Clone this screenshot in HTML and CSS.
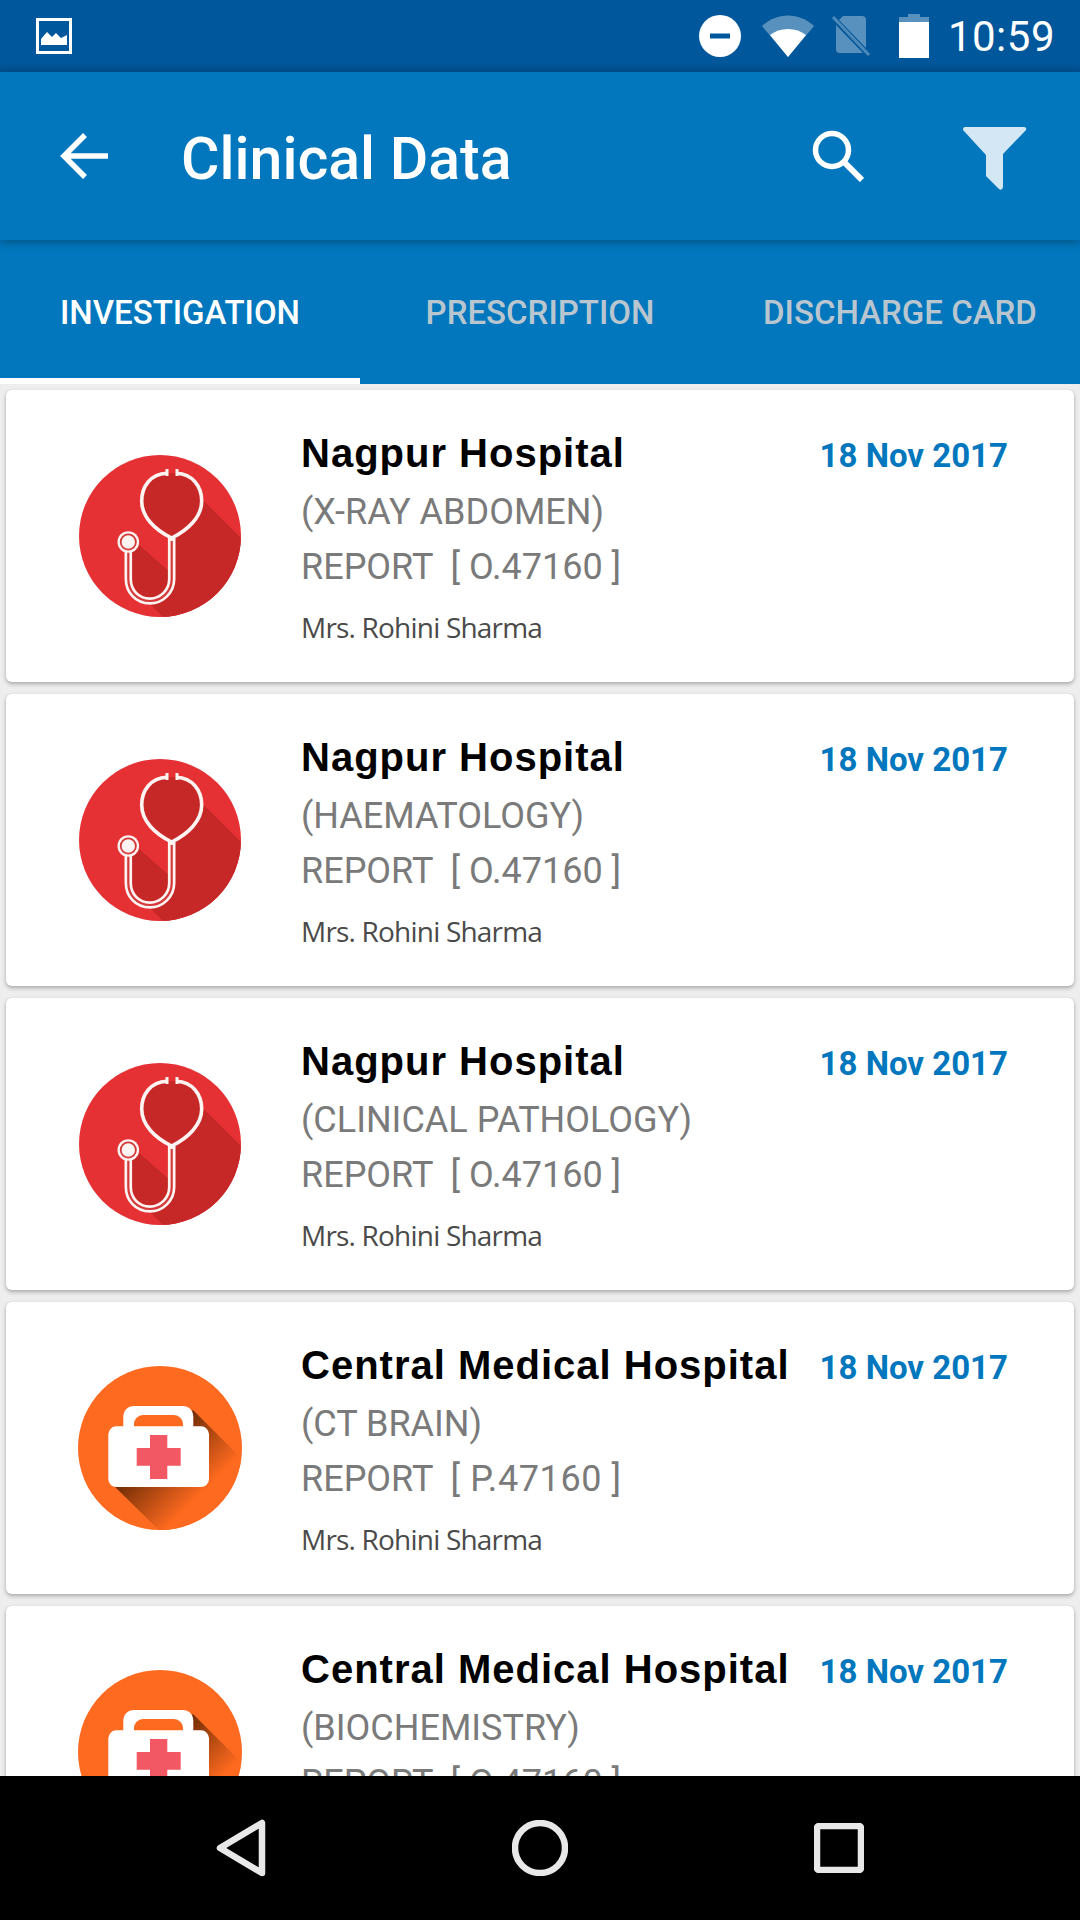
FILE: index.html
```html
<!DOCTYPE html>
<html lang="en">
<head>
    <meta charset="UTF-8">
    <meta name="viewport" content="width=device-width, initial-scale=1.0">
    <title>Clinical Data</title>
    <link rel="stylesheet" href="styles.css">
</head>
<body>
    <svg class="defs" width="0" height="0">
        <defs>
            <clipPath id="stethClip"><circle cx="81" cy="81" r="81"/></clipPath>
            <clipPath id="kitClip"><circle cx="82" cy="82" r="82"/></clipPath>
            <linearGradient id="kitShade" gradientUnits="userSpaceOnUse" x1="40" y1="119" x2="86" y2="165">
                <stop offset="0" stop-color="#6f2c06"/>
                <stop offset="1" stop-color="#fe6a1f"/>
            </linearGradient>
            <symbol id="steth" viewBox="0 0 162 162">
                <circle cx="81" cy="81" r="81" fill="#e53034"/>
                <g clip-path="url(#stethClip)">
                    <polygon points="97,18 170,91 170,170 92,170 48,126 50,96 58,88 92,118 92,80" fill="#c62828"/>
                </g>
                <path d="M87.7 18.3C72 19 62.7 31 62.7 46C62.7 62 76 75 92.7 83C109 75 122.7 62 122.7 46C122.7 31 113 19 97.7 18.3" fill="#c62828" stroke="#fdf3f1" stroke-width="3.6"/>
                <path d="M88 14V21M98 14V21" stroke="#fdf3f1" stroke-width="3" fill="none"/>
                <path d="M92.7 83V124C92.7 137 82 146 71 146C58 146 49.3 136 49.3 124V97" fill="none" stroke="#fdf3f1" stroke-width="7.6"/>
                <path d="M92.7 86V124C92.7 137 82 146 71 146C58 146 49.3 136 49.3 124V97" fill="none" stroke="#d3393b" stroke-width="2.2"/>
                <circle cx="49.3" cy="87" r="10.8" fill="#fdf3f1"/>
                <circle cx="49.3" cy="87" r="7.6" fill="#fdf3f1" stroke="#d3393b" stroke-width="1.8"/>
            </symbol>
            <symbol id="kit" viewBox="0 0 164 164">
                <circle cx="82" cy="82" r="82" fill="#fe6a1f"/>
                <g clip-path="url(#kitClip)">
                    <polygon points="115,44 175,104 175,175 92,175 34,118" fill="url(#kitShade)"/>
                </g>
                <path d="M45.3 62V50a10 10 0 0 1 10-10H105.3a10 10 0 0 1 10 10V62Z" fill="#fff"/>
                <path d="M56 61V58a9 9 0 0 1 9-9H96a9 9 0 0 1 9 9V61Z" fill="#fe6a1f"/>
                <rect x="30.3" y="60.3" width="100.7" height="60.7" rx="8" fill="#fff"/>
                <path d="M72 69H89.3V82H102.7V99.7H89.3V113H72V99.7H58.7V82H72Z" fill="#f25764"/>
            </symbol>
        </defs>
    </svg>

    <div class="phone">
        <div class="status-bar">
            <svg class="st-image" width="36" height="36" viewBox="0 0 36 36">
                <rect x="1.5" y="1.5" width="33" height="33" fill="none" stroke="#fff" stroke-width="3"/>
                <path d="M5 27V21L11 14L16 19L20 15L25 20L31 17V27Z" fill="#fff"/>
            </svg>
            <div class="status-right">
                <svg width="42" height="42" viewBox="0 0 42 42">
                    <circle cx="21" cy="21" r="21" fill="#fff"/>
                    <rect x="11" y="18.5" width="20" height="5" fill="#01579b"/>
                </svg>
                <svg width="52" height="42" viewBox="0 0 52 42">
                    <path d="M26 42L0 11C15 -3 37 -3 52 11Z" fill="#fff" opacity="0.35"/>
                    <path d="M26 42L8 20C18 12 34 12 44 20Z" fill="#fff"/>
                </svg>
                <svg class="st-sim" width="40" height="42" viewBox="0 0 40 42">
                    <path d="M12 1H31a4 4 0 0 1 4 4V33L8 5Z" fill="#fff" opacity="0.35"/>
                    <path d="M5 10L32 38H9a4 4 0 0 1-4-4Z" fill="#fff" opacity="0.35"/>
                    <path d="M2 2L38 40" stroke="#fff" stroke-width="3" opacity="0.3"/>
                </svg>
                <svg class="st-battery" width="30" height="44" viewBox="0 0 30 44">
                    <path d="M9 0H21V3H30V8H0V3H9Z" fill="#fff" opacity="0.35"/>
                    <rect y="8" width="30" height="36" fill="#fff"/>
                </svg>
                <span class="clock">10:59</span>
            </div>
        </div>

        <header class="toolbar">
            <svg class="back" width="50" height="48" viewBox="0 0 50 48">
                <path d="M48 24H4M25 3L4 24L25 45" fill="none" stroke="#fff" stroke-width="5.5"/>
            </svg>
            <h1 class="page-title">Clinical Data</h1>
            <svg class="search" width="52" height="52" viewBox="0 0 52 52">
                <circle cx="20" cy="20" r="16.5" fill="none" stroke="#fff" stroke-width="5.5"/>
                <path d="M32 32L50 50" stroke="#fff" stroke-width="6"/>
            </svg>
            <svg class="filter" width="64" height="64" viewBox="0 0 64 64">
                <path d="M2 0H61Q64 0 63 3L40 27V60Q39 64 36 62L23 49V28L0 3Q0 0 2 0Z" fill="#d3e7f5"/>
            </svg>
        </header>

        <nav class="tabs">
            <div class="tab active">INVESTIGATION</div>
            <div class="tab">PRESCRIPTION</div>
            <div class="tab">DISCHARGE CARD</div>
        </nav>

        <main class="list">
            <article class="card">
                <svg class="icon"><use href="#steth"/></svg>
                <div class="info">
                    <div class="top-row"><span class="hospital">Nagpur Hospital</span><span class="date">18 Nov 2017</span></div>
                    <div class="test">(X-RAY ABDOMEN)</div>
                    <div class="report">REPORT  [ O.47160 ]</div>
                    <div class="patient">Mrs. Rohini Sharma</div>
                </div>
            </article>
            <article class="card">
                <svg class="icon"><use href="#steth"/></svg>
                <div class="info">
                    <div class="top-row"><span class="hospital">Nagpur Hospital</span><span class="date">18 Nov 2017</span></div>
                    <div class="test">(HAEMATOLOGY)</div>
                    <div class="report">REPORT  [ O.47160 ]</div>
                    <div class="patient">Mrs. Rohini Sharma</div>
                </div>
            </article>
            <article class="card">
                <svg class="icon"><use href="#steth"/></svg>
                <div class="info">
                    <div class="top-row"><span class="hospital">Nagpur Hospital</span><span class="date">18 Nov 2017</span></div>
                    <div class="test">(CLINICAL PATHOLOGY)</div>
                    <div class="report">REPORT  [ O.47160 ]</div>
                    <div class="patient">Mrs. Rohini Sharma</div>
                </div>
            </article>
            <article class="card">
                <svg class="icon icon-kit"><use href="#kit"/></svg>
                <div class="info">
                    <div class="top-row"><span class="hospital">Central Medical Hospital</span><span class="date">18 Nov 2017</span></div>
                    <div class="test">(CT BRAIN)</div>
                    <div class="report">REPORT  <span class="code-wide">[ P.47160 ]</span></div>
                    <div class="patient">Mrs. Rohini Sharma</div>
                </div>
            </article>
            <article class="card">
                <svg class="icon icon-kit"><use href="#kit"/></svg>
                <div class="info">
                    <div class="top-row"><span class="hospital">Central Medical Hospital</span><span class="date">18 Nov 2017</span></div>
                    <div class="test">(BIOCHEMISTRY)</div>
                    <div class="report">REPORT  [ O.47160 ]</div>
                    <div class="patient">Mrs. Rohini Sharma</div>
                </div>
            </article>
        </main>

        <footer class="nav-bar">
            <svg width="50" height="58" viewBox="0 0 50 58">
                <path d="M46 4V54L4 29Z" fill="none" stroke="#e8e8e8" stroke-width="6.5" stroke-linejoin="round"/>
            </svg>
            <svg width="56" height="56" viewBox="0 0 56 56">
                <circle cx="28" cy="28" r="25" fill="none" stroke="#e8e8e8" stroke-width="6.5"/>
            </svg>
            <svg width="50" height="50" viewBox="0 0 50 50">
                <rect x="3" y="3" width="44" height="44" rx="2" fill="none" stroke="#e8e8e8" stroke-width="6.5"/>
            </svg>
        </footer>
    </div>
</body>
</html>
```

FILE: styles.css
```css
* {
    margin: 0;
    padding: 0;
    box-sizing: border-box;
}

body {
    font-family: Roboto, sans-serif;
    background: #000;
}

.defs {
    position: absolute;
}

.phone {
    width: 1080px;
    height: 1920px;
    display: flex;
    flex-direction: column;
    overflow: hidden;
}

.status-bar {
    height: 72px;
    flex: none;
    display: flex;
    align-items: center;
    justify-content: space-between;
    padding: 0 25px 0 36px;
    background: linear-gradient(#01579b 85%, #014f8e 100%);
}

.status-right {
    display: flex;
    align-items: center;
    gap: 21px;
}

.st-sim {
    margin-left: -4px;
}

.st-battery {
    margin-left: 7px;
}

.clock {
    color: #fff;
    font-size: 42px;
    letter-spacing: 0.5px;
    margin-left: -2px;
}

.toolbar {
    height: 168px;
    flex: none;
    display: flex;
    align-items: center;
    padding: 0 53px 0 60px;
    background: #0277bd;
    box-shadow: 0 3px 8px rgba(0, 0, 0, 0.28);
    position: relative;
    z-index: 2;
}

.page-title {
    flex: 1;
    margin-left: 71px;
    padding-top: 4px;
    color: #fff;
    font-size: 59px;
    font-weight: 500;
}

.search {
    margin-right: 99px;
}

.filter {
    margin-top: 5px;
}

.tabs {
    height: 144px;
    flex: none;
    display: flex;
    background: #0277bd;
}

.tab {
    flex: 1;
    display: flex;
    align-items: center;
    justify-content: center;
    color: #b9c6cf;
    font-size: 33px;
    font-weight: 500;
}

.tab.active {
    color: #fff;
    border-bottom: 6px solid #fff;
    padding-top: 6px;
}

.list {
    flex: 1;
    min-height: 0;
    overflow: hidden;
    display: flex;
    flex-direction: column;
    gap: 12px;
    padding: 6px 6px 0;
    background: #eeeeee;
}

.card {
    flex: none;
    height: 292px;
    display: flex;
    align-items: center;
    padding-left: 73px;
    padding-right: 66px;
    background: #fff;
    border-radius: 6px;
    box-shadow: 0 2px 4px rgba(0, 0, 0, 0.3);
}

.icon {
    flex: none;
    width: 162px;
    height: 162px;
}

.icon-kit {
    width: 164px;
    height: 164px;
    margin: 0 -1px;
}

.info {
    flex: 1;
    margin-left: 60px;
    align-self: flex-start;
    padding-top: 38px;
}

.top-row {
    display: flex;
    justify-content: space-between;
    align-items: baseline;
}

.hospital {
    color: #000;
    font-family: "Liberation Sans", Arial, sans-serif;
    font-size: 40px;
    font-weight: 700;
    letter-spacing: 1px;
    line-height: 50px;
}

.date {
    color: #0277bd;
    font-size: 33px;
    font-weight: 700;
}

.test,
.report {
    color: #7a7a7a;
    font-size: 36px;
    line-height: 55px;
    white-space: pre;
}

.test {
    margin-top: 7px;
}

.code-wide {
    letter-spacing: 0.6px;
}

.patient {
    margin-top: 12px;
    color: #4a4a4a;
    font-family: "Open Sans", sans-serif;
    font-size: 28px;
    letter-spacing: -0.8px;
    line-height: 40px;
}

.nav-bar {
    height: 144px;
    flex: none;
    display: flex;
    align-items: center;
    justify-content: space-between;
    padding: 0 216px;
    background: #000;
}
```
